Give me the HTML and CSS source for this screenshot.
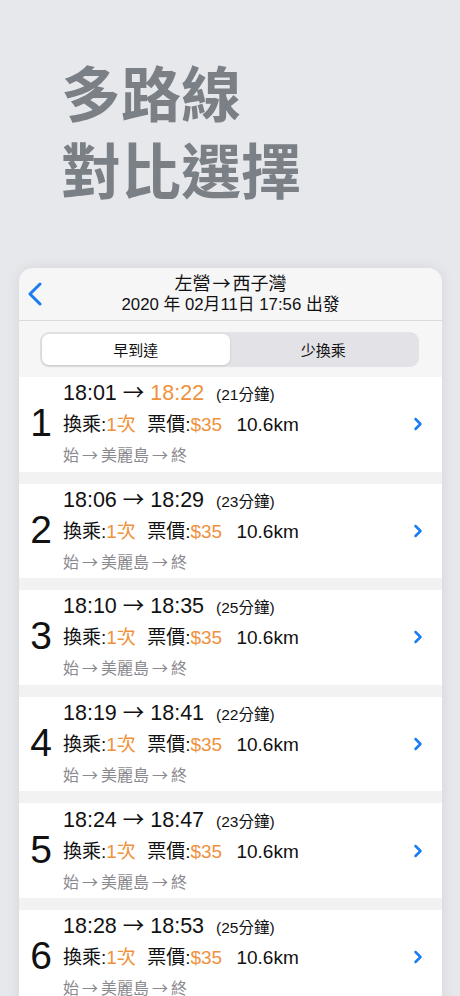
FILE: index.html
```html
<!DOCTYPE html>
<html lang="zh-Hant">
<head>
  <meta charset="UTF-8">
  <meta name="viewport" content="width=device-width, initial-scale=1">
  <title>多路線對比選擇</title>
  <link rel="stylesheet" href="styles.css">
</head>
<body>
  <header class="hero">
    <h1>多路線<br>對比選擇</h1>
  </header>

  <main class="card">
    <div class="nav">
      <svg class="back" width="16" height="24" viewBox="0 0 16 24"><path d="M13 2 L3 12 L13 22" fill="none" stroke="#1b7cf2" stroke-width="3" stroke-linecap="round" stroke-linejoin="round"/></svg>
      <div class="nav-title">
        <div class="route">左營<i>→</i>西子灣</div>
        <div class="date">2020 年 02月11日 17:56 出發</div>
      </div>
      <span></span>
    </div>

    <div class="tabs">
      <div class="seg">
        <button class="active">早到達</button>
        <button>少換乘</button>
      </div>
    </div>

    <ul class="list">
      <li class="row">
        <div class="num">1</div>
        <div class="info">
          <div class="time">18:01 <i>→</i> <span class="hl">18:22</span> <small>(21分鐘)</small></div>
          <div class="meta">換乘:<span class="hl">1次</span> <b>票價:<span class="hl">$35</span></b> <b class="km">10.6km</b></div>
          <div class="stops">始<i>→</i>美麗島<i>→</i>終</div>
        </div>
        <svg class="go" width="10" height="14" viewBox="0 0 10 14"><path d="M2.5 2 L7.5 7 L2.5 12" fill="none" stroke="#1b7cf2" stroke-width="2.5" stroke-linecap="round" stroke-linejoin="round"/></svg>
      </li>
      <li class="row">
        <div class="num">2</div>
        <div class="info">
          <div class="time">18:06 <i>→</i> 18:29 <small>(23分鐘)</small></div>
          <div class="meta">換乘:<span class="hl">1次</span> <b>票價:<span class="hl">$35</span></b> <b class="km">10.6km</b></div>
          <div class="stops">始<i>→</i>美麗島<i>→</i>終</div>
        </div>
        <svg class="go" width="10" height="14" viewBox="0 0 10 14"><path d="M2.5 2 L7.5 7 L2.5 12" fill="none" stroke="#1b7cf2" stroke-width="2.5" stroke-linecap="round" stroke-linejoin="round"/></svg>
      </li>
      <li class="row">
        <div class="num">3</div>
        <div class="info">
          <div class="time">18:10 <i>→</i> 18:35 <small>(25分鐘)</small></div>
          <div class="meta">換乘:<span class="hl">1次</span> <b>票價:<span class="hl">$35</span></b> <b class="km">10.6km</b></div>
          <div class="stops">始<i>→</i>美麗島<i>→</i>終</div>
        </div>
        <svg class="go" width="10" height="14" viewBox="0 0 10 14"><path d="M2.5 2 L7.5 7 L2.5 12" fill="none" stroke="#1b7cf2" stroke-width="2.5" stroke-linecap="round" stroke-linejoin="round"/></svg>
      </li>
      <li class="row">
        <div class="num">4</div>
        <div class="info">
          <div class="time">18:19 <i>→</i> 18:41 <small>(22分鐘)</small></div>
          <div class="meta">換乘:<span class="hl">1次</span> <b>票價:<span class="hl">$35</span></b> <b class="km">10.6km</b></div>
          <div class="stops">始<i>→</i>美麗島<i>→</i>終</div>
        </div>
        <svg class="go" width="10" height="14" viewBox="0 0 10 14"><path d="M2.5 2 L7.5 7 L2.5 12" fill="none" stroke="#1b7cf2" stroke-width="2.5" stroke-linecap="round" stroke-linejoin="round"/></svg>
      </li>
      <li class="row">
        <div class="num">5</div>
        <div class="info">
          <div class="time">18:24 <i>→</i> 18:47 <small>(23分鐘)</small></div>
          <div class="meta">換乘:<span class="hl">1次</span> <b>票價:<span class="hl">$35</span></b> <b class="km">10.6km</b></div>
          <div class="stops">始<i>→</i>美麗島<i>→</i>終</div>
        </div>
        <svg class="go" width="10" height="14" viewBox="0 0 10 14"><path d="M2.5 2 L7.5 7 L2.5 12" fill="none" stroke="#1b7cf2" stroke-width="2.5" stroke-linecap="round" stroke-linejoin="round"/></svg>
      </li>
      <li class="row">
        <div class="num">6</div>
        <div class="info">
          <div class="time">18:28 <i>→</i> 18:53 <small>(25分鐘)</small></div>
          <div class="meta">換乘:<span class="hl">1次</span> <b>票價:<span class="hl">$35</span></b> <b class="km">10.6km</b></div>
          <div class="stops">始<i>→</i>美麗島<i>→</i>終</div>
        </div>
        <svg class="go" width="10" height="14" viewBox="0 0 10 14"><path d="M2.5 2 L7.5 7 L2.5 12" fill="none" stroke="#1b7cf2" stroke-width="2.5" stroke-linecap="round" stroke-linejoin="round"/></svg>
      </li>
    </ul>
  </main>
</body>
</html>
```

FILE: styles.css
```css
body {
  margin: 0;
  background: #e7e8ec;
  font-family: "Liberation Sans", "Noto Sans CJK TC", sans-serif;
  color: #111;
  height: 996px;
  overflow: hidden;
}

i {
  font-style: normal;
  font-family: "Noto Sans CJK TC", sans-serif;
}

.hero {
  padding: 52px 0 0 61px;
}

.hero h1 {
  margin: 0;
  font-family: "Noto Sans CJK TC", sans-serif;
  font-weight: 700;
  font-size: 60px;
  line-height: 77px;
  color: #7b8086;
}

.card {
  margin: 62px 18px 0 19px;
  background: #f6f6f7;
  border-radius: 14px 14px 0 0;
  box-shadow: 0 0 14px rgba(0, 0, 0, 0.08);
  overflow: hidden;
}

.nav {
  height: 52px;
  display: grid;
  grid-template-columns: 44px 1fr 44px;
  align-items: center;
  border-bottom: 1px solid #dadadc;
}

.back {
  margin-left: 8px;
}

.nav-title {
  text-align: center;
  padding-bottom: 2px;
}

.route {
  font-size: 18px;
  line-height: 22px;
}

.route i {
  margin: 0 2px;
}

.date {
  font-size: 16.8px;
  line-height: 20px;
}

.tabs {
  padding: 11px 23px 10px 21px;
}

.seg {
  display: flex;
  height: 35px;
  padding: 2px;
  box-sizing: border-box;
  background: #e3e3e7;
  border-radius: 9px;
}

.seg button {
  flex: 1;
  border: 0;
  background: none;
  font-family: inherit;
  font-size: 15px;
  color: #111;
  border-radius: 7px;
}

.seg button.active {
  background: #fff;
  box-shadow: 0 1px 3px rgba(0, 0, 0, 0.12);
}

.list {
  list-style: none;
  margin: 0;
  padding: 0;
  background: #f2f2f3;
}

.row {
  height: 94.6px;
  margin-bottom: 12px;
  background: #fff;
  display: flex;
  align-items: center;
}

.num {
  width: 44px;
  text-align: center;
  font-size: 39px;
  padding-bottom: 2px;
}

.info {
  flex: 1;
  padding-bottom: 2px;
}

.time {
  font-size: 21.5px;
  line-height: 30px;
}

.time small {
  font-size: 15.5px;
  margin-left: 6px;
}

.meta {
  font-size: 19px;
  line-height: 30px;
}

.meta b {
  font-weight: normal;
  margin-left: 6px;
}

.meta .km {
  margin-left: 9px;
}

.stops {
  font-size: 16px;
  line-height: 29px;
  color: #8a8a8e;
}

.stops i {
  margin: 0 3px;
}

.hl {
  color: #f0913c;
}

.go {
  margin-right: 19px;
}
```
